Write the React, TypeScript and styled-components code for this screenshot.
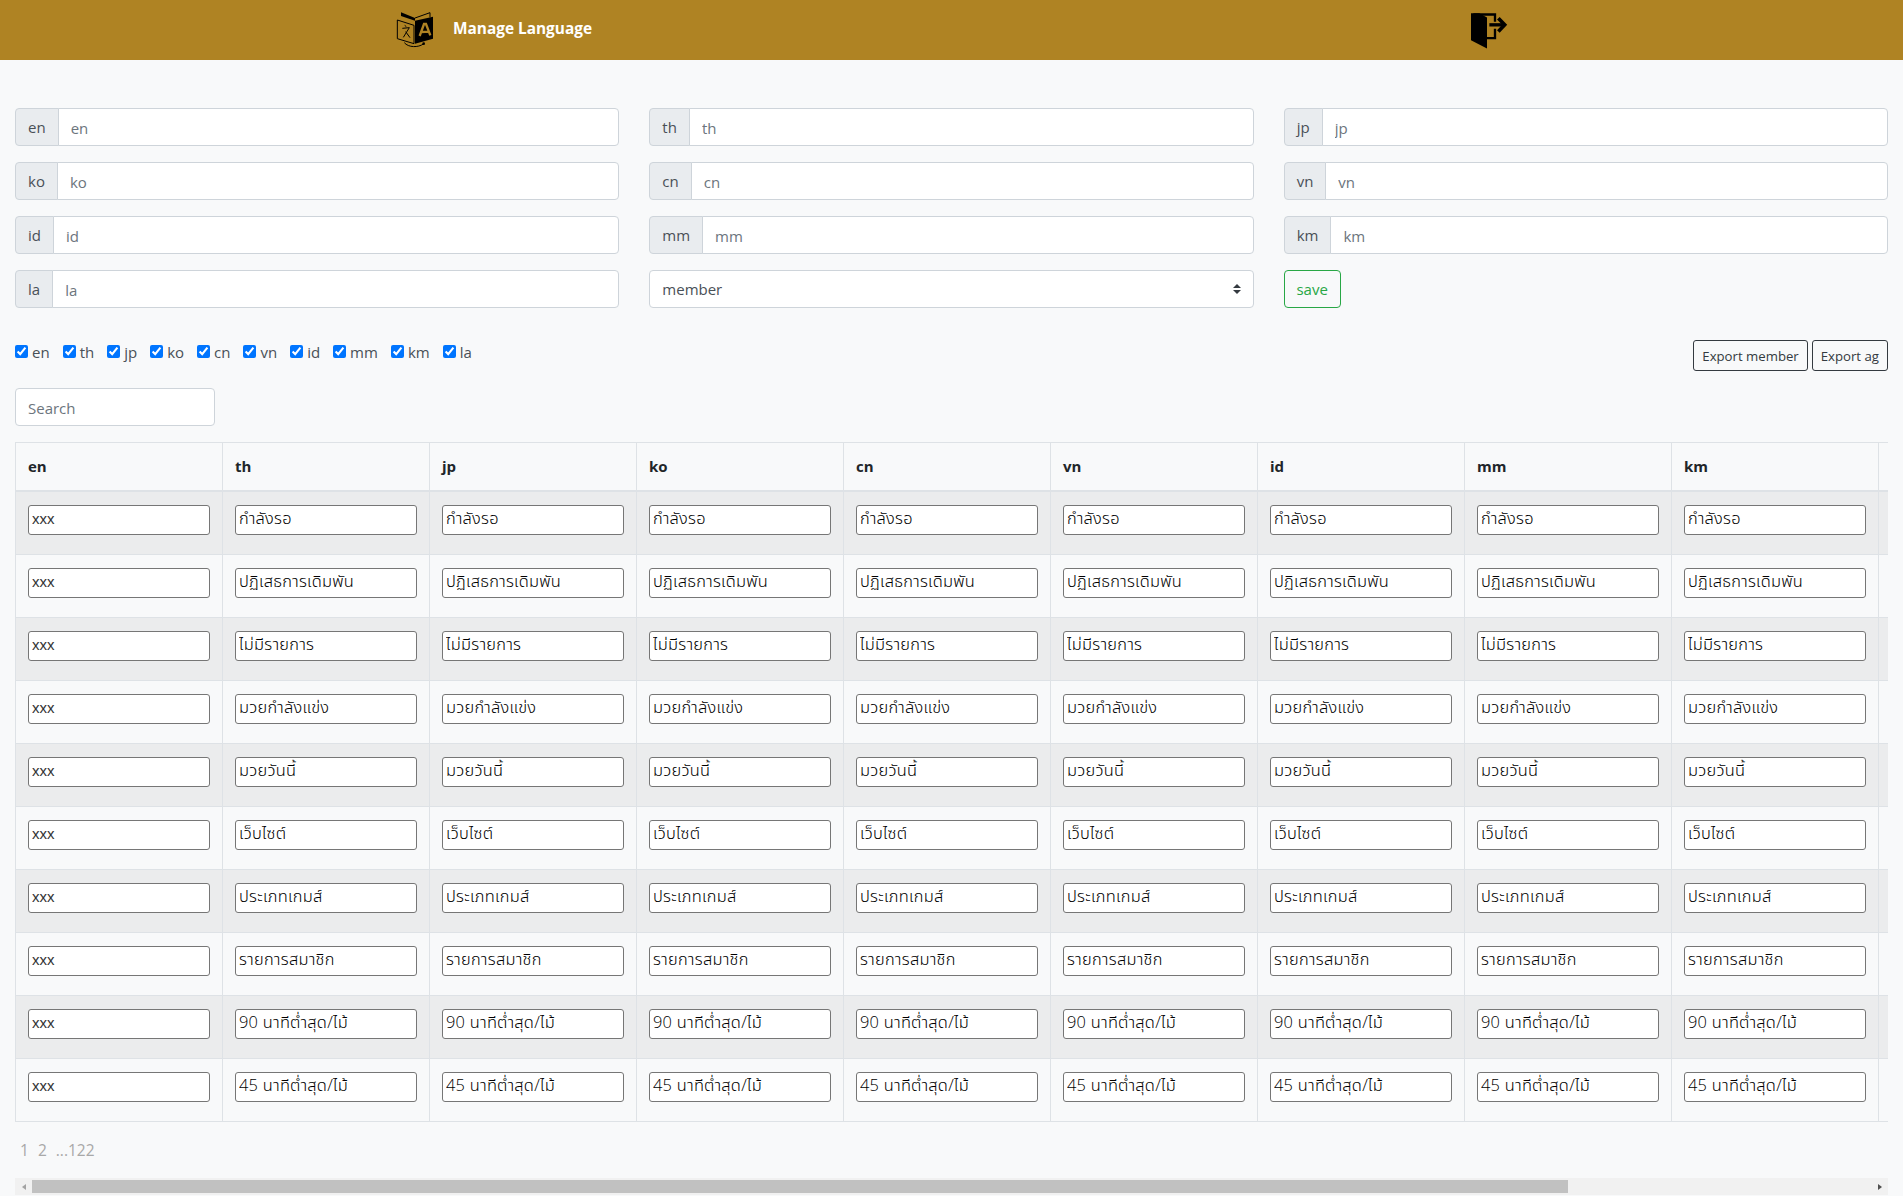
import React from "react"
import styled, { createGlobalStyle } from "styled-components"

const uiFont = `"Open Sans", "Noto Sans", sans-serif`
const cellFont = `"Liberation Sans", "Noto Sans Thai", "Noto Sans", sans-serif`
const thaiFont = `"Open Sans", "Noto Sans Thai", "Noto Sans", sans-serif`

const langs = ["en", "th", "jp", "ko", "cn", "vn", "id", "mm", "km", "la"]
const tableLangs = langs.slice(0, 9)

const leftFields = ["en", "ko", "id", "la"]
const midFields = ["th", "cn", "mm"]
const rightFields = ["jp", "vn", "km"]

const rows = [
  "กำลังรอ",
  "ปฏิเสธการเดิมพัน",
  "ไม่มีรายการ",
  "มวยกำลังแข่ง",
  "มวยวันนี้",
  "เว็บไซต์",
  "ประเภทเกมส์",
  "รายการสมาชิก",
  "90 นาทีต่ำสุด/ไม้",
  "45 นาทีต่ำสุด/ไม้",
]

const GlobalStyle = createGlobalStyle`
  html, body {
    margin: 0;
    padding: 0;
    background-color: #f8f9fa;
    font-family: ${uiFont};
    font-size: 15px;
    line-height: 24px;
    color: #212529;
  }
  * {
    box-sizing: border-box;
  }
`

const LanguageIcon = () => (
  <svg width="38" height="36" viewBox="108 36 114 108" fill="none">
    <path d="M123 37 L165 54 L165 62 L123 48 Z" fill="#000" />
    <path d="M165 54 L210 38 L210 52" stroke="#000" strokeWidth="3" />
    <path d="M112 60 L162 76 L162 131 L112 116 Z" stroke="#000" strokeWidth="3" />
    <path d="M165 62 L219 50 L219 116 L165 131 Z" fill="#000" />
    <path
      d="M179 108 L192 72 L198 72 L211 106 M184 96 L206 95"
      stroke="#AF8323"
      strokeWidth="7"
    />
    <path
      d="M127 85 L148 83 L130 112 M137 95 L150 113 M134 76 L139 80"
      stroke="#000"
      strokeWidth="3"
    />
    <path d="M133 128 C145 143 175 143 190 132" stroke="#000" strokeWidth="3" />
    <circle cx="191" cy="131" r="4" fill="#000" />
  </svg>
)

const ExitIcon = () => (
  <svg width="38" height="37" viewBox="90 34 114 110" fill="none">
    <path d="M93 37 L118 37 L141 50 L141 143 L93 118 Z" fill="#000" />
    <path d="M100 41 L165 41 L165 63 M165 84 L165 112 L141 112" stroke="#000" strokeWidth="7" />
    <path d="M148 72 L190 72" stroke="#000" strokeWidth="10" />
    <path d="M175 52 L194 72 L175 92" stroke="#000" strokeWidth="11" />
  </svg>
)

const SelectArrows = () => (
  <svg width="8" height="10" viewBox="0 0 4 5">
    <path fill="#343a40" d="M2 0L0 2h4zm0 5L0 3h4z" />
  </svg>
)

const App = () => {
  return (
    <>
      <GlobalStyle />
      <TopBar>
        <Brand>
          <LanguageIcon />
          <BrandTitle>Manage Language</BrandTitle>
        </Brand>
        <ExitIcon />
      </TopBar>
      <FormGrid>
        <FormColumn>
          {leftFields.map((name) => (
            <InputGroup key={name}>
              <Addon>{name}</Addon>
              <TextField placeholder={name} />
            </InputGroup>
          ))}
        </FormColumn>
        <FormColumn>
          {midFields.map((name) => (
            <InputGroup key={name}>
              <Addon>{name}</Addon>
              <TextField placeholder={name} />
            </InputGroup>
          ))}
          <SelectWrap>
            <SelectField defaultValue="member">
              <option value="member">member</option>
              <option value="ag">ag</option>
            </SelectField>
            <ArrowSlot>
              <SelectArrows />
            </ArrowSlot>
          </SelectWrap>
        </FormColumn>
        <FormColumn>
          {rightFields.map((name) => (
            <InputGroup key={name}>
              <Addon>{name}</Addon>
              <TextField placeholder={name} />
            </InputGroup>
          ))}
          <div>
            <SaveButton>save</SaveButton>
          </div>
        </FormColumn>
      </FormGrid>
      <FilterBar>
        <CheckList>
          {langs.map((name) => (
            <CheckLabel key={name}>
              <input type="checkbox" defaultChecked />
              <span>{name}</span>
            </CheckLabel>
          ))}
        </CheckList>
        <ExportGroup>
          <ExportButton>Export member</ExportButton>
          <ExportButton>Export ag</ExportButton>
        </ExportGroup>
      </FilterBar>
      <SearchField placeholder="Search" />
      <TableArea>
        <ClipBox>
          <DataTable>
            <thead>
              <tr>
                {tableLangs.map((name) => (
                  <HeadCell key={name}>{name}</HeadCell>
                ))}
                <HeadCell />
              </tr>
            </thead>
            <tbody>
              {rows.map((text, i) => (
                <Row key={i} $striped={i % 2 === 0}>
                  {tableLangs.map((name) => (
                    <Cell key={name}>
                      {name === "en" ? (
                        <LatinInput defaultValue="xxx" />
                      ) : (
                        <ThaiInput defaultValue={text} />
                      )}
                    </Cell>
                  ))}
                  <Cell />
                </Row>
              ))}
            </tbody>
          </DataTable>
        </ClipBox>
        <Pagination>
          <PageLink>1</PageLink>
          <PageLink>2</PageLink>
          <PageLink>...122</PageLink>
        </Pagination>
        <ScrollBar>
          <ScrollButton>
            <ArrowLeft />
          </ScrollButton>
          <ScrollRail>
            <ScrollThumb />
          </ScrollRail>
          <ScrollButton>
            <ArrowRight />
          </ScrollButton>
        </ScrollBar>
      </TableArea>
    </>
  )
}

const TopBar = styled.header`
  height: 60px;
  padding: 0 395px 0 396px;
  display: flex;
  align-items: center;
  justify-content: space-between;
  background-color: #af8323;
`

const Brand = styled.div`
  display: flex;
  align-items: center;
  gap: 19px;
`

const BrandTitle = styled.span`
  margin-top: -3px;
  color: #fff;
  font-size: 15.4px;
  font-weight: 700;
`

const FormGrid = styled.div`
  display: grid;
  grid-template-columns: repeat(3, 1fr);
  gap: 30px;
  padding: 48px 15px 0;
`

const FormColumn = styled.div`
  display: flex;
  flex-direction: column;
  gap: 16px;
  min-width: 0;
`

const InputGroup = styled.div`
  display: flex;
  height: 38px;
`

const Addon = styled.span`
  display: flex;
  align-items: center;
  padding: 0 12px;
  color: #495057;
  background-color: #e9ecef;
  border: 1px solid #ced4da;
  border-radius: 4px 0 0 4px;
`

const TextField = styled.input`
  flex: 1;
  min-width: 0;
  margin-left: -1px;
  padding: 8px 12px 6px;
  font-family: ${uiFont};
  font-size: 15px;
  color: #495057;
  background-color: #fff;
  border: 1px solid #ced4da;
  border-radius: 0 4px 4px 0;
  outline: none;

  &::placeholder {
    color: #6c757d;
  }
`

const SelectWrap = styled.div`
  position: relative;
  height: 38px;
`

const SelectField = styled.select`
  width: 100%;
  height: 38px;
  padding: 6px 28px 6px 12px;
  font-family: ${uiFont};
  font-size: 15px;
  color: #495057;
  background-color: #fff;
  border: 1px solid #ced4da;
  border-radius: 4px;
  appearance: none;
  outline: none;
`

const ArrowSlot = styled.span`
  position: absolute;
  top: 14px;
  right: 13px;
  line-height: 0;
  pointer-events: none;
`

const SaveButton = styled.button`
  height: 38px;
  width: 57px;
  padding: 0;
  font-family: ${uiFont};
  font-size: 15px;
  color: #28a745;
  background: transparent;
  border: 1px solid #28a745;
  border-radius: 4px;
`

const FilterBar = styled.div`
  display: flex;
  align-items: flex-start;
  justify-content: space-between;
  height: 31px;
  margin: 32px 15px 17px;
`

const CheckList = styled.div`
  display: flex;
  gap: 13px;
`

const CheckLabel = styled.label`
  display: flex;
  align-items: center;
  gap: 4px;
  color: #495057;

  input {
    margin: 0 0 2px;
    width: 13px;
    height: 13px;
  }
`

const ExportGroup = styled.div`
  display: flex;
  gap: 4px;
`

const ExportButton = styled.button`
  height: 31px;
  padding: 0 8px;
  font-family: ${uiFont};
  font-size: 13.2px;
  color: #343a40;
  background: transparent;
  border: 1px solid #343a40;
  border-radius: 3px;
`

const SearchField = styled.input`
  display: block;
  width: 200px;
  height: 38px;
  margin: 0 15px 16px;
  padding: 8px 12px 6px;
  font-family: ${uiFont};
  font-size: 15px;
  background-color: #fff;
  border: 1px solid #ced4da;
  border-radius: 4px;
  outline: none;

  &::placeholder {
    color: #6c757d;
  }
`

const TableArea = styled.div`
  margin: 0 15px;
`

const ClipBox = styled.div`
  overflow: hidden;
`

const DataTable = styled.table`
  width: 2070px;
  table-layout: fixed;
  border-collapse: collapse;
`

const HeadCell = styled.th`
  width: 207px;
  padding: 11px 12px 12px;
  font-size: 15px;
  font-weight: 700;
  text-align: left;
  border: 1px solid #dee2e6;
  border-bottom-width: 2px;
`

const Row = styled.tr<{ $striped: boolean }>`
  background-color: ${(p) => (p.$striped ? "rgba(0, 0, 0, 0.05)" : "transparent")};
`

const Cell = styled.td`
  padding: 12px;
  vertical-align: top;
  border: 1px solid #dee2e6;
`

const LatinInput = styled.input`
  display: block;
  width: 182px;
  height: 30px;
  margin: 1px 0 7px;
  padding: 0 2px 3px 3px;
  font-family: ${cellFont};
  font-size: 15px;
  color: #333;
  background-color: #fff;
  border: 1px solid #767676;
  border-radius: 3px;
  outline: none;
`

const ThaiInput = styled(LatinInput)`
  font-family: ${thaiFont};
  font-size: 16.4px;
  font-weight: 300;
  letter-spacing: 0.25px;
  color: #000;
`

const Pagination = styled.div`
  display: flex;
  gap: 9px;
  height: 56px;
  padding: 16px 0 0 5px;
`

const PageLink = styled.span`
  color: #a8a8a8;
  font-size: 15.5px;
`

const ScrollBar = styled.div`
  display: flex;
  height: 17px;
  background-color: #f1f1f1;
`

const ScrollButton = styled.div`
  display: flex;
  align-items: center;
  justify-content: center;
  flex: 0 0 17px;
`

const ArrowLeft = styled.span`
  border-top: 3.5px solid transparent;
  border-bottom: 3.5px solid transparent;
  border-right: 4px solid #a3a3a3;
`

const ArrowRight = styled.span`
  border-top: 3.5px solid transparent;
  border-bottom: 3.5px solid transparent;
  border-left: 4px solid #505050;
`

const ScrollRail = styled.div`
  flex: 1;
  padding: 2px 0;
`

const ScrollThumb = styled.div`
  width: 83.5%;
  height: 13px;
  background-color: #c1c1c1;
`

export default App
